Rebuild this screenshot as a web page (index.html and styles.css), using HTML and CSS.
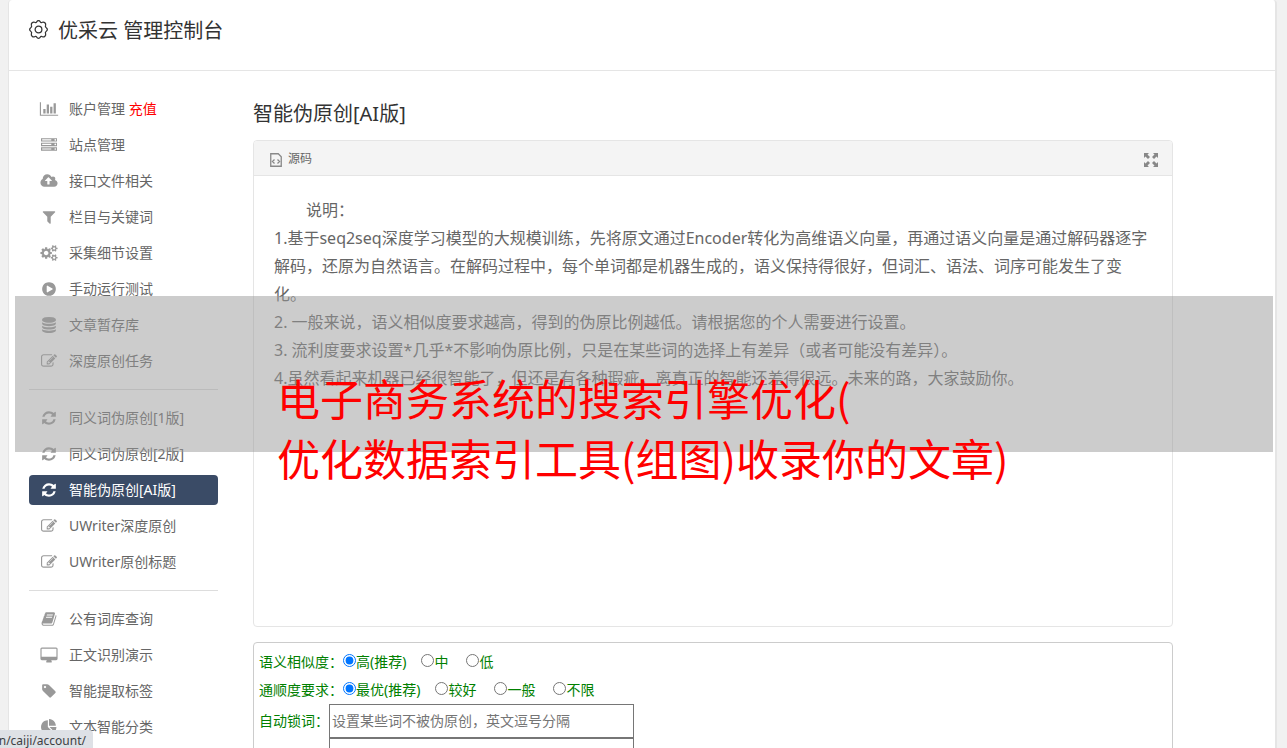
FILE: index.html
```
<!DOCTYPE html>
<html lang="zh-CN">
<head>
    <meta charset="UTF-8">
    <meta name="viewport" content="width=device-width, initial-scale=1.0">
    <title>优采云 管理控制台</title>
    <link rel="stylesheet" href="styles.css">
</head>
<body>
    <svg class="sprite" aria-hidden="true">
        <symbol id="i-chart" viewBox="-128 0 2304 1792"><path d="M640 896v512h-256v-512h256zm384-512v1024h-256v-1024h256zm1024 1152v128h-2048v-1536h128v1408h1920zm-640-896v768h-256v-768h256zm384-384v1152h-256v-1152h256z"/></symbol>
        <symbol id="i-server" viewBox="-256 0 2304 1792"><path d="M128 1408h1024v-128h-1024v128zm0-512h1024v-128h-1024v128zm1568 448q0-40-28-68t-68-28-68 28-28 68 28 68 68 28 68-28 28-68zm-1568-960h1024v-128h-1024v128zm1568 448q0-40-28-68t-68-28-68 28-28 68 28 68 68 28 68-28 28-68zm0-512q0-40-28-68t-68-28-68 28-28 68 28 68 68 28 68-28 28-68zm96 832v384h-1792v-384h1792zm0-512v384h-1792v-384h1792zm0-512v384h-1792v-384h1792z"/></symbol>
        <symbol id="i-upload" viewBox="-192 0 2304 1792"><path d="M1280 864q0-14-9-23l-352-352q-9-9-23-9t-23 9l-351 351q-10 12-10 24 0 14 9 23t23 9h224v352q0 13 9.500 22.500t22.500 9.500h192q13 0 22.500-9.500t9.500-22.500v-352h224q13 0 22.500-9.500t9.500-22.500zm640 288q0 159-112.500 271.500t-271.500 112.500h-1088q-185 0-316.500-131.500t-131.500-316.500q0-130 70-240t188-165q-2-30-2-43 0-212 150-362t362-150q156 0 285.500 87t188.500 231q71-62 166-62 106 0 181 75t75 181q0 76-41 138 130 31 213.500 135.500t83.500 238.500z"/></symbol>
        <symbol id="i-filter" viewBox="-256 0 2304 1792"><path d="M1595 295q17 41-14 70l-493 493v742q0 42-39 59-13 5-25 5-27 0-45-19l-256-256q-19-19-19-45v-486l-493-493q-31-29-14-70 17-39 59-39h1280q42 0 59 39z"/></symbol>
        <symbol id="i-cogs" viewBox="-192 0 2304 1792"><path d="M896 896q0-106-75-181t-181-75-181 75-75 181 75 181 181 75 181-75 75-181zm768 512q0-52-38-90t-90-38-90 38-38 90q0 53 37.500 90.500t90.500 37.500 90.500-37.500 37.500-90.500zm0-1024q0-52-38-90t-90-38-90 38-38 90q0 53 37.500 90.500t90.500 37.500 90.500-37.500 37.500-90.500zm-384 421v185q0 10-7 19.500t-16 10.500l-155 24q-11 35-32 76 34 48 90 115 7 11 7 20 0 12-7 19-23 30-82.500 89.500t-78.500 59.500q-11 0-21-7l-115-90q-37 19-77 31-11 108-23 155-7 24-30 24h-186q-11 0-20-7.500t-10-17.500l-23-153q-34-10-75-31l-118 89q-7 7-20 7-11 0-21-8-144-133-144-160 0-9 7-19 10-14 41-53t47-61q-23-44-35-82l-152-24q-10-1-17-9.500t-7-19.500v-185q0-10 7-19.500t16-10.500l155-24q11-35 32-76-34-48-90-115-7-11-7-20 0-12 7-20 22-30 82-89t79-59q11 0 21 7l115 90q34-18 77-32 11-108 23-154 7-24 30-24h186q11 0 20 7.500t10 17.500l23 153q34 10 75 31l118-89q8-7 20-7 11 0 21 8 144 133 144 160 0 8-7 19-12 16-42 54t-45 60q23 48 34 82l152 23q10 2 17 10.500t7 19.500zm640 533v140q0 16-149 31-12 27-30 52 51 113 51 138 0 4-4 7-122 71-124 71-8 0-46-47t-52-68q-20 2-30 2t-30-2q-14 21-52 68t-46 47q-2 0-124-71-4-3-4-7 0-25 51-138-18-25-30-52-149-15-149-31v-140q0-16 149-31 13-29 30-52-51-113-51-138 0-4 4-7 4-2 35-20t59-34 30-16q8 0 46 46.500t52 67.500q20-2 30-2t30 2q51-71 92-112l6-2q4 0 124 70 4 3 4 7 0 25-51 138 17 23 30 52 149 15 149 31zm0-1024v140q0 16-149 31-12 27-30 52 51 113 51 138 0 4-4 7-122 71-124 71-8 0-46-47t-52-68q-20 2-30 2t-30-2q-14 21-52 68t-46 47q-2 0-124-71-4-3-4-7 0-25 51-138-18-25-30-52-149-15-149-31v-140q0-16 149-31 13-29 30-52-51-113-51-138 0-4 4-7 4-2 35-20t59-34 30-16q8 0 46 46.500t52 67.500q20-2 30-2t30 2q51-71 92-112l6-2q4 0 124 70 4 3 4 7 0 25-51 138 17 23 30 52 149 15 149 31z"/></symbol>
        <symbol id="i-play" viewBox="-256 0 2304 1792"><path d="M896 128q209 0 385.500 103t279.500 279.500 103 385.500-103 385.500-279.500 279.500-385.500 103-385.500-103-279.500-279.500-103-385.500 103-385.500 279.500-279.500 385.500-103zm384 823q32-18 32-55t-32-55l-544-320q-31-19-64-1-32 19-32 56v640q0 37 32 56 16 8 32 8 17 0 32-9z"/></symbol>
        <symbol id="i-database" viewBox="-256 0 2304 1792"><path d="M896 768q237 0 443-43t325-127v170q0 69-103 128t-280 93.500-385 34.500-385-34.500-280-93.500-103-128v-170q119 84 325 127t443 43zm0 768q237 0 443-43t325-127v170q0 69-103 128t-280 93.500-385 34.500-385-34.500-280-93.500-103-128v-170q119 84 325 127t443 43zm0-384q237 0 443-43t325-127v170q0 69-103 128t-280 93.500-385 34.500-385-34.500-280-93.500-103-128v-170q119 84 325 127t443 43zm0-1152q208 0 385 34.500t280 93.500 103 128v128q0 69-103 128t-280 93.500-385 34.500-385-34.500-280-93.500-103-128v-128q0-69 103-128t280-93.500 385-34.500z"/></symbol>
        <symbol id="i-edit" viewBox="-256 0 2304 1792"><path d="M888 1184l116-116-152-152-116 116v56h96v96h56zm440-720q-16-16-33 1l-350 350q-17 17-1 33t33-1l350-350q17-17 1-33zm80 594v190q0 119-84.500 203.500t-203.500 84.500h-832q-119 0-203.500-84.500t-84.500-203.500v-832q0-119 84.500-203.500t203.500-84.500h832q63 0 117 25 15 7 18 23 3 17-9 29l-49 49q-14 14-32 8-23-6-45-6h-832q-66 0-113 47t-47 113v832q0 66 47 113t113 47h832q66 0 113-47t47-113v-126q0-13 9-22l64-64q15-15 35-7t20 29zm-96-738l288 288-672 672h-288v-288zm444 132l-92 92-288-288 92-92q28-28 68-28t68 28l152 152q28 28 28 68t-28 68z"/></symbol>
        <symbol id="i-refresh" viewBox="-256 0 2304 1792"><path d="M1639 1056q0 5-1 7-64 268-268 434.500t-478 166.500q-146 0-282.500-55t-243.500-157l-129 129q-19 19-45 19t-45-19-19-45v-448q0-26 19-45t45-19h448q26 0 45 19t19 45-19 45l-137 137q71 66 161 102t187 36q134 0 250-65t186-179q11-17 53-117 8-23 30-23h192q13 0 22.500 9.500t9.500 22.500zm25-800v448q0 26-19 45t-45 19h-448q-26 0-45-19t-19-45 19-45l138-138q-148-137-349-137-134 0-250 65t-186 179q-11 17-53 117-8 23-30 23h-199q-13 0-22.500-9.500t-9.500-22.500v-7q65-268 270-434.500t480-166.500q146 0 284 55.500t245 156.500l130-129q19-19 45-19t45 19 19 45z"/></symbol>
        <symbol id="i-book" viewBox="-256 0 2304 1792"><path d="M1703 478q40 57 18 129l-275 906q-19 64-76.500 107.500t-122.500 43.500h-923q-77 0-148.500-53.500t-99.500-131.500q-24-67-2-127 0-4 3-27t4-37q1-8-3-21.500t-3-19.500q2-11 8-21t16.500-23.500 16.500-23.500q23-38 45-91.500t30-91.500q3-10 .5-30t-.5-28q3-11 17-28t17-23q21-36 42-92t25-90q1-9-2.500-32t.5-28q4-13 22-30.500t22-22.500q19-26 42.500-84.500t27.500-96.500q1-8-3-25.500t-2-26.500q2-8 9-18t18-23 17-21q8-12 16.500-30.500t15-35 16-36 19.500-32 26.500-23.500 36-11.500 47.500 5.500l-1 3q38-9 51-9h761q74 0 114 56t18 130l-274 906q-36 119-71.500 153.500t-128.500 34.500h-869q-27 0-38 15-11 16-1 43 24 70 144 70h923q29 0 56-15.500t35-41.500l300-987q7-22 5-57 38 15 59 43zm-1064 2q-4 13 2 22.500t20 9.500h608q13 0 25.500-9.500t16.500-22.500l21-64q4-13-2-22.500t-20-9.500h-608q-13 0-25.500 9.500t-16.500 22.500zm-83 256q-4 13 2 22.500t20 9.500h608q13 0 25.500-9.500t16.500-22.500l21-64q4-13-2-22.500t-20-9.500h-608q-13 0-25.500 9.500t-16.500 22.500z"/></symbol>
        <symbol id="i-desktop" viewBox="-192 0 2304 1792"><path d="M1792 1056v-832q0-13-9.500-22.500t-22.500-9.500h-1600q-13 0-22.500 9.500t-9.500 22.500v832q0 13 9.500 22.500t22.500 9.500h1600q13 0 22.500-9.500t9.500-22.500zm128-832v1088q0 66-47 113t-113 47h-544q0 37 16 77.500t32 71 16 43.500q0 26-19 45t-45 19h-512q-26 0-45-19t-19-45q0-14 16-44t32-70 16-78h-544q-66 0-113-47t-47-113v-1088q0-66 47-113t113-47h1600q66 0 113 47t47 113z"/></symbol>
        <symbol id="i-tag" viewBox="-256 0 2304 1792"><path d="M576 448q0-53-37.500-90.500t-90.500-37.500-90.500 37.500-37.500 90.500 37.500 90.500 90.500 37.500 90.500-37.500 37.500-90.500zm1067 576q0 53-37 90l-491 492q-39 37-91 37-53 0-90-37l-715-716q-38-37-64.500-101t-26.500-117v-416q0-52 38-90t90-38h416q53 0 117 26.500t102 64.500l715 714q37 39 37 91z"/></symbol>
        <symbol id="i-pie" viewBox="-256 0 2304 1792"><path d="M768 890l546 546q-106 108-247.500 168t-298.500 60q-209 0-385.500-103t-279.500-279.500-103-385.500 103-385.500 279.500-279.500 385.500-103v762zm187 6h773q0 157-60 298.500t-168 247.500zm709-128h-768v-768q209 0 385.500 103t279.500 279.500 103 385.500z"/></symbol>
    </svg>

    <div class="page">
        <header class="header">
            <svg class="gear" viewBox="0 0 18 18">
                <path d="M7.400 1.600C8 .3 10 .3 10.600 1.600C11 2.500 11.800 2.700 12.700 2.100C14.400 1.400 16.300 3.300 15.700 5C15.200 6.200 15.500 6.900 16.400 7.400C17.700 8 17.700 10 16.400 10.600C15.500 11.100 15.200 11.800 15.700 13C16.300 14.700 14.400 16.600 12.700 15.900C11.800 15.300 11 15.500 10.600 16.400C10 17.700 8 17.700 7.400 16.400C7 15.500 6.200 15.300 5.300 15.900C3.600 16.600 1.700 14.700 2.300 13C2.800 11.800 2.500 11.100 1.600 10.600C.3 10 .3 8 1.600 7.400C2.500 6.900 2.800 6.200 2.300 5C1.700 3.300 3.600 1.400 5.300 2.100C6.200 2.700 7 2.500 7.400 1.600Z"/>
                <circle cx="9" cy="9" r="3.200"/>
            </svg>
            <h1>优采云 管理控制台</h1>
        </header>

        <div class="main">
            <nav class="sidebar">
                <ul>
                    <li><a href="#"><svg><use href="#i-chart"/></svg>账户管理&nbsp;<span class="pay">充值</span></a></li>
                    <li><a href="#"><svg><use href="#i-server"/></svg>站点管理</a></li>
                    <li><a href="#"><svg><use href="#i-upload"/></svg>接口文件相关</a></li>
                    <li><a href="#"><svg><use href="#i-filter"/></svg>栏目与关键词</a></li>
                    <li><a href="#"><svg><use href="#i-cogs"/></svg>采集细节设置</a></li>
                    <li><a href="#"><svg><use href="#i-play"/></svg>手动运行测试</a></li>
                    <li><a href="#"><svg><use href="#i-database"/></svg>文章暂存库</a></li>
                    <li><a href="#"><svg><use href="#i-edit"/></svg>深度原创任务</a></li>
                </ul>
                <ul>
                    <li><a href="#"><svg><use href="#i-refresh"/></svg>同义词伪原创[1版]</a></li>
                    <li><a href="#"><svg><use href="#i-refresh"/></svg>同义词伪原创[2版]</a></li>
                    <li><a href="#" class="active"><svg><use href="#i-refresh"/></svg>智能伪原创[AI版]</a></li>
                    <li><a href="#"><svg><use href="#i-edit"/></svg>UWriter深度原创</a></li>
                    <li><a href="#"><svg><use href="#i-edit"/></svg>UWriter原创标题</a></li>
                </ul>
                <ul>
                    <li><a href="#"><svg><use href="#i-book"/></svg>公有词库查询</a></li>
                    <li><a href="#"><svg><use href="#i-desktop"/></svg>正文识别演示</a></li>
                    <li><a href="#"><svg><use href="#i-tag"/></svg>智能提取标签</a></li>
                    <li><a href="#"><svg><use href="#i-pie"/></svg>文本智能分类</a></li>
                </ul>
            </nav>

            <main class="content">
                <h2>智能伪原创[AI版]</h2>

                <section class="editor">
                    <div class="toolbar">
                        <button type="button" class="source">
                            <svg viewBox="0 0 12 14"><path d="M.75.75h7.500l3 3v9.500H.75zM4.500 6.500l-2 2 2 2M7.500 6.500l2 2-2 2"/></svg>
                            源码
                        </button>
                        <button type="button" class="expand" aria-label="全屏">
                            <svg viewBox="0 0 14 14"><path d="M0 0h5L3.500 1.500 6 4 4 6 1.500 3.500 0 5zM14 0v5l-1.500-1.500L10 6 8 4l2.500-2.500L9 0zM0 14V9l1.500 1.500L4 8l2 2-2.500 2.500L5 14zM14 14H9l1.500-1.500L8 10l2-2 2.500 2.500L14 9z"/></svg>
                        </button>
                    </div>
                    <div class="text">
                        <p class="lead">说明：</p>
                        <p>1.基于seq2seq深度学习模型的大规模训练，先将原文通过Encoder转化为高维语义向量，再通过语义向量是通过解码器逐字解码，还原为自然语言。在解码过程中，每个单词都是机器生成的，语义保持得很好，但词汇、语法、词序可能发生了变化。</p>
                        <p>2. 一般来说，语义相似度要求越高，得到的伪原比例越低。请根据您的个人需要进行设置。</p>
                        <p>3. 流利度要求设置*几乎*不影响伪原比例，只是在某些词的选择上有差异（或者可能没有差异）。</p>
                        <p>4.虽然看起来机器已经很智能了，但还是有各种瑕疵，离真正的智能还差得很远。未来的路，大家鼓励你。</p>
                    </div>
                </section>

                <form class="options">
                    <div class="row">
                        <span>语义相似度：</span>
                        <label><input type="radio" name="similar" checked>高(推荐)</label>
                        <label><input type="radio" name="similar">中</label>
                        <label><input type="radio" name="similar">低</label>
                    </div>
                    <div class="row">
                        <span>通顺度要求：</span>
                        <label><input type="radio" name="fluency" checked>最优(推荐)</label>
                        <label><input type="radio" name="fluency">较好</label>
                        <label><input type="radio" name="fluency">一般</label>
                        <label><input type="radio" name="fluency">不限</label>
                    </div>
                    <div class="lock">
                        <label for="lock-words">自动锁词：</label>
                        <div class="fields">
                            <input type="text" id="lock-words" placeholder="设置某些词不被伪原创，英文逗号分隔">
                            <input type="text" aria-label="锁词">
                        </div>
                    </div>
                </form>
            </main>
        </div>
    </div>

    <div class="banner">
        <p>电子商务系统的搜索引擎优化(<br>优化数据索引工具(组图)收录你的文章)</p>
    </div>
    <div class="status">n/caiji/account/</div>
</body>
</html>
```
FILE: styles.css
```
* {
    box-sizing: border-box;
}
body {
    margin: 0;
    height: 100vh;
    overflow: hidden;
    background-color: #f1f1f1;
    color: #666;
    font-family: "Noto Sans", "Noto Sans CJK SC", sans-serif;
    font-size: 14px;
}
h1, h2, p, ul {
    margin: 0;
    padding: 0;
}
h1, h2 {
    color: #333;
    font-size: 20px;
    font-weight: normal;
    line-height: 30px;
}
button {
    padding: 0;
    border: 0;
    background: none;
    color: inherit;
    font: inherit;
}
.sprite {
    display: none;
}
.page {
    min-height: 100vh;
    margin: 0 10px 0 8px;
    background-color: #fff;
    border: 1px solid #e5e5e5;
    border-top: 0;
    border-right-width: 2px;
    border-radius: 4px 4px 0 0;
}
.header {
    display: flex;
    gap: 10px;
    height: 71px;
    padding: 16px 20px;
    border-bottom: 1px solid #e5e5e5;
}
.gear {
    width: 19px;
    height: 19px;
    margin-top: 4px;
    fill: none;
    stroke: #333;
    stroke-width: 1.2;
}
.main {
    display: flex;
    gap: 35px;
    padding: 23px 102px 0 20px;
}

/* sidebar */
.sidebar {
    flex: 0 0 189px;
}
.sidebar ul {
    display: flex;
    flex-direction: column;
    gap: 6px;
    list-style: none;
}
.sidebar ul + ul {
    margin-top: 13px;
    padding-top: 13px;
    border-top: 1px solid #ddd;
}
.sidebar a {
    display: flex;
    align-items: center;
    height: 30px;
    padding-left: 9px;
    border-radius: 4px;
    color: #666;
    line-height: 30px;
    text-decoration: none;
}
.sidebar svg {
    width: 22px;
    height: 16px;
    margin-right: 9px;
    fill: #999;
}
.sidebar .pay {
    color: #f00;
}
.sidebar .active {
    background-color: #3a4b66;
    color: #fff;
}
.sidebar .active svg {
    fill: #fff;
}

/* content */
.content {
    flex: 1;
    min-width: 0;
}
.content h2 {
    margin: 5px 0 11px;
}
.editor {
    border: 1px solid #e5e5e5;
    border-radius: 4px;
    overflow: hidden;
}
.toolbar {
    display: flex;
    justify-content: space-between;
    height: 35px;
    padding: 0 14px 0 16px;
    background-color: #f4f4f4;
    border-bottom: 1px solid #e5e5e5;
}
.source {
    display: flex;
    align-items: center;
    gap: 6px;
    font-size: 12px;
}
.source svg {
    width: 12px;
    height: 14px;
    margin-top: 4px;
    fill: none;
    stroke: #888;
    stroke-width: 1.3;
}
.expand svg {
    display: block;
    width: 14px;
    height: 14px;
    margin-top: 4px;
    fill: #888;
}
.text {
    min-height: 450px;
    padding: 20px;
    font-size: 16px;
    line-height: 28px;
}
.lead {
    text-indent: 2em;
}
.options {
    margin-top: 15px;
    padding: 5px;
    border: 1px solid #ccc;
    border-radius: 4px;
    color: #008000;
}
.row {
    display: flex;
    height: 28px;
    line-height: 28px;
}
.row label {
    display: flex;
    margin-right: 18px;
}
.row span + label {
    margin-right: 15px;
}
.row input {
    width: 13px;
    height: 13px;
    margin: 6px 0 0;
}
.lock {
    display: flex;
    line-height: 34px;
}
.fields {
    display: flex;
    flex-direction: column;
}
.fields input {
    width: 305px;
    height: 34px;
    padding: 1px 2px;
    border: 1px solid #767676;
    border-radius: 0;
    font: inherit;
}
.fields input::placeholder {
    color: #757575;
}

/* banner across the page */
.banner {
    position: absolute;
    top: 296px;
    left: 15px;
    right: 14px;
    height: 156px;
    padding: 71px 0 0 262px;
    background-color: rgba(153, 153, 153, 0.5);
    color: #f00;
    font-family: "Noto Sans CJK SC", sans-serif;
    font-size: 43px;
    line-height: 60px;
    white-space: nowrap;
}

/* link address in the corner */
.status {
    position: absolute;
    bottom: 0;
    left: 0;
    display: flex;
    justify-content: flex-end;
    width: 93px;
    height: 18px;
    padding-right: 7px;
    overflow: hidden;
    background-color: #dee1e6;
    border-top-right-radius: 4px;
    color: #3c4043;
    font-size: 12px;
    line-height: 22px;
}
```
